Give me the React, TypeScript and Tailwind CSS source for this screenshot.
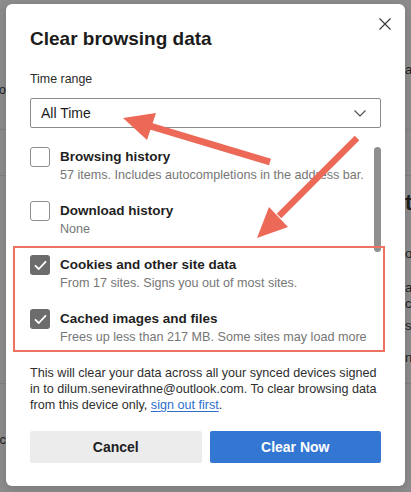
import React from 'react';

interface DataItem {
  title: string;
  desc: string;
  checked: boolean;
}

const ITEMS: DataItem[] = [
  { title: 'Browsing history', desc: '57 items. Includes autocompletions in the address bar.', checked: false },
  { title: 'Download history', desc: 'None', checked: false },
  { title: 'Cookies and other site data', desc: 'From 17 sites. Signs you out of most sites.', checked: true },
  { title: 'Cached images and files', desc: 'Frees up less than 217 MB. Some sites may load more slowly on your next visit.', checked: true },
];

function Checkbox({ checked }: { checked: boolean }) {
  if (!checked) {
    return <div className="w-5 h-5 shrink-0 rounded-[3px] border border-[#8e8e8e] bg-white" />;
  }
  return (
    <div className="w-5 h-5 shrink-0 rounded-[3px] bg-[#6c6c6c] flex items-center justify-center">
      <svg width="13" height="11" viewBox="0 0 13 11" fill="none">
        <path d="M1.5 5.8 L4.8 9 L11.5 1.8" stroke="white" strokeWidth="1.8" strokeLinecap="round" strokeLinejoin="round" />
      </svg>
    </div>
  );
}

// strip of the settings page that peeks out behind the dialog
function EdgeCell({ text, side, className }: { text: React.ReactNode; side: 'left' | 'right'; className?: string }) {
  return (
    <div className={`w-[6px] overflow-hidden flex ${side === 'left' ? 'justify-end' : 'justify-start'} ${className ?? ''}`}>
      <div className="whitespace-nowrap">{text}</div>
    </div>
  );
}

export default function App() {
  return (
    <div className="relative w-[411px] h-[492px] overflow-hidden bg-[#8c8c8c] font-['Liberation_Sans',Arial,sans-serif]">
      {/* page behind the overlay */}
      <div className="flex flex-col text-[13px] text-[#1e1e1e]">
        <div className="h-[130px] border-b border-[#7f7f7f] flex justify-between">
          <EdgeCell side="left" className="pt-[80px] leading-[19px]" text={<>Do<br />to</>} />
          <EdgeCell side="right" className="pt-[60px]" text="a" />
        </div>
        <div className="h-[46px] border-b border-[#7f7f7f]" />
        <div className="h-[208px] border-b border-[#7f7f7f] flex justify-between">
          <div />
          <div className="w-[6px] overflow-hidden flex flex-col pt-[14px] whitespace-nowrap">
            <div className="text-[22px] font-bold leading-[26px]">to</div>
            <div className="mt-[30px] leading-4">on</div>
            <div className="mt-[18px] leading-4">at</div>
            <div className="leading-4">co</div>
            <div className="mt-[6px] leading-4">se</div>
            <div className="mt-[16px] leading-4">no</div>
          </div>
        </div>
        <div className="flex justify-between">
          <EdgeCell side="left" className="pt-[46px]" text="ac" />
          <div />
        </div>
      </div>

      {/* dialog */}
      <div className="absolute left-[6px] top-[4px] w-[399px] h-[482px] bg-white rounded-[6px] shadow-[0_2px_10px_rgba(0,0,0,0.15)] px-6 pt-[23px]">
        <button className="absolute left-[373px] top-[14px] w-3 h-3">
          <svg width="12" height="12" viewBox="0 0 12 12" fill="none">
            <path d="M0.5 0.5 L11.5 11.5 M11.5 0.5 L0.5 11.5" stroke="#3a3a3a" strokeWidth="1.2" />
          </svg>
        </button>

        <h2 className="text-[19px] leading-6 font-bold text-[#1b1b1b]">Clear browsing data</h2>

        <div className="mt-5 text-[12.4px] leading-4 text-[#2b2b2b]">Time range</div>

        <div className="mt-[11px] h-[30px] border-[1.5px] border-[#8a8a8a] rounded-[2px] flex items-center justify-between pl-[10px] pr-[14px]">
          <span className="text-[14px] text-[#1b1b1b]">All Time</span>
          <svg width="12" height="7" viewBox="0 0 12 7" fill="none">
            <path d="M0.5 0.5 L6 6 L11.5 0.5" stroke="#4a4a4a" strokeWidth="1.1" />
          </svg>
        </div>

        <div className="relative mt-[10px] h-[208px] overflow-hidden">
          <div className="flex flex-col gap-[18px] pt-[9px] pr-[12px]">
            {ITEMS.map((item) => (
              <div key={item.title} className="flex gap-[10px]">
                <Checkbox checked={item.checked} />
                <div className="flex-1 min-w-0">
                  <div className="text-[13.5px] leading-5 font-bold text-[#1f1f1f]">{item.title}</div>
                  <div className="text-[12.6px] leading-4 text-[#767676]">{item.desc}</div>
                </div>
              </div>
            ))}
          </div>
          <div className="absolute right-0 top-[9px] w-[7px] h-[105px] rounded-full bg-[#8f8f8f]" />
        </div>

        <p className="mt-[19px] text-[12.6px] leading-4 text-[#2e2e2e]">
          This will clear your data across all your synced devices signed in to dilum.senevirathne@outlook.com. To clear browsing data from this device only,{' '}
          <a className="text-[#2d6fcb] underline underline-offset-2">sign out first</a>.
        </p>

        <div className="mt-[18px] flex gap-2">
          <button className="flex-1 h-8 rounded-[2px] bg-[#ececec] text-[14px] font-bold text-[#1e1e1e]">Cancel</button>
          <button className="flex-1 h-8 rounded-[2px] bg-[#3377d2] text-[14px] font-bold text-white">Clear Now</button>
        </div>
      </div>

      {/* annotations */}
      <div className="absolute left-[13px] top-[246px] w-[372px] h-[106px] border-2 border-[#ee7162]" />
      <svg className="absolute inset-0 pointer-events-none" width="411" height="492" viewBox="0 0 411 492">
        <line x1="270" y1="162" x2="150" y2="126" stroke="#ec6958" strokeWidth="7" />
        <polygon points="123,118 156,113 147,140" fill="#ec6958" />
        <line x1="357" y1="138" x2="279" y2="216" stroke="#ec6958" strokeWidth="6.5" />
        <polygon points="257,238 269,207 288,227" fill="#ec6958" />
      </svg>
    </div>
  );
}
